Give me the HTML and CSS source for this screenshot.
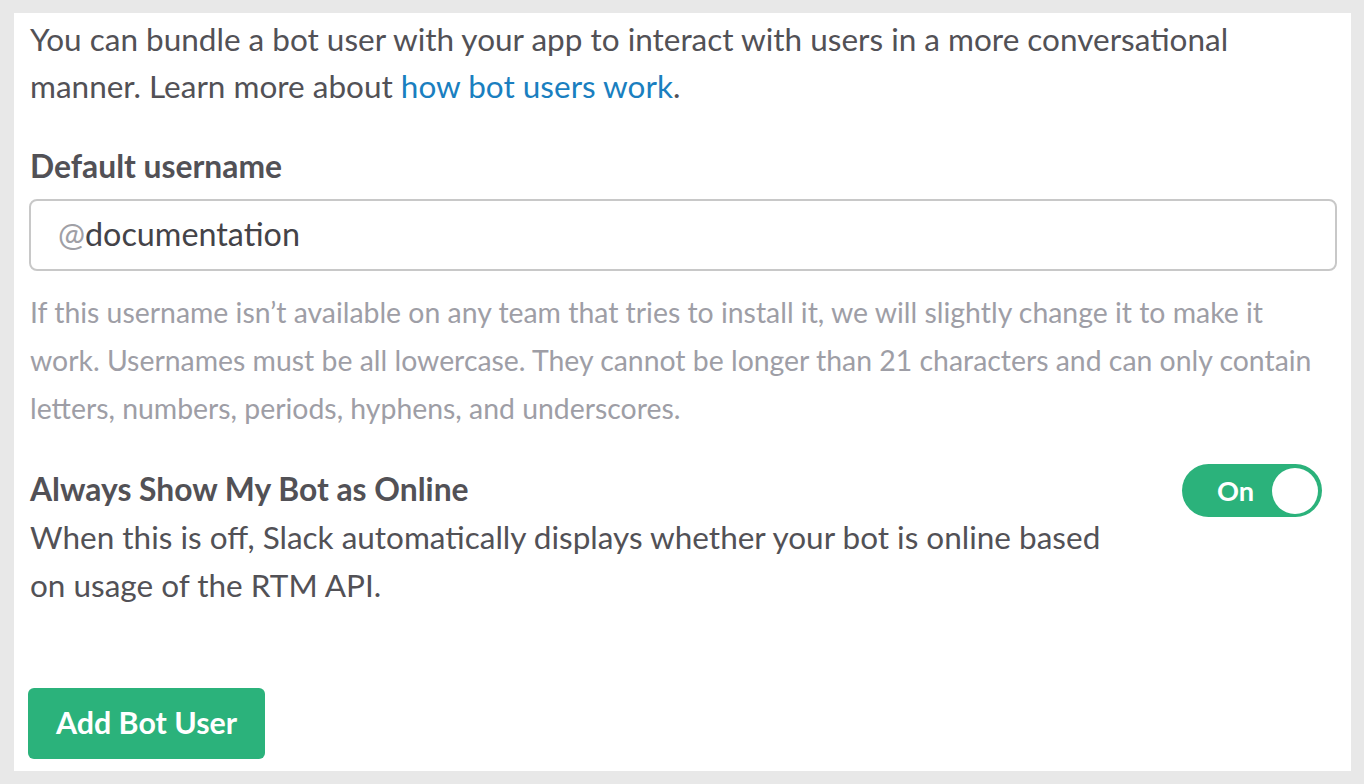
FILE: index.html
```html
<!DOCTYPE html>
<html>
<head>
<meta charset="utf-8">
<link rel="stylesheet" href="styles.css">
</head>
<body>
<div class="card">
  <p class="intro">You can bundle a bot user with your app to interact with users in a more conversational manner. Learn more about <a class="link" href="#">how bot users work</a>.</p>
  <label class="label">Default username</label>
  <div class="input"><span class="at">@</span>documentation</div>
  <p class="help">If this username isn’t available on any team that tries to install it, we will slightly change it to make it work. Usernames must be all lowercase. They cannot be longer than 21 characters and can only contain letters, numbers, periods, hyphens, and underscores.</p>
  <div class="setting">
    <div class="setting-text">
      <div class="setting-title">Always Show My Bot as Online</div>
      <p class="setting-desc">When this is off, Slack automatically displays whether your bot is online based on usage of the RTM API.</p>
    </div>
    <div class="toggle"><span class="toggle-label">On</span><span class="knob"></span></div>
  </div>
  <button class="btn">Add Bot User</button>
</div>
</body>
</html>
```
FILE: styles.css
```css
html, body {
  margin: 0;
  padding: 0;
}
body {
  background: #e8e8e8;
  padding: 13px 13px 13px 14px;
  font-family: Lato, "Liberation Sans", sans-serif;
  color: #525156;
}
.card {
  background: #fff;
  height: 758px;
  box-sizing: border-box;
  padding: 3px 14px 0 15px;
}
.intro {
  margin: 0;
  font-size: 31.5px;
  line-height: 47px;
  padding-left: 1px;
}
.link {
  color: #1a7fc0;
  text-decoration: none;
}
.label {
  display: block;
  margin-top: 33px;
  font-weight: 700;
  font-size: 31.8px;
  line-height: 47px;
  padding-left: 1px;
}
.input {
  margin-top: 9px;
  height: 72px;
  box-sizing: border-box;
  border: 2px solid #c8c8c8;
  border-radius: 8px;
  padding: 0 0 3px 27px;
  display: flex;
  align-items: center;
  font-size: 32.3px;
  color: #444348;
}
.at {
  color: #a0a0a6;
}
.help {
  margin: 17px 0 0;
  font-size: 28.4px;
  line-height: 48px;
  color: #9e9ea6;
  padding-left: 1px;
}
.setting {
  margin-top: 33px;
  display: flex;
  justify-content: space-between;
  align-items: flex-start;
}
.setting-text {
  width: 1086px;
  padding-left: 1px;
}
.setting-title {
  font-weight: 700;
  font-size: 31.8px;
  line-height: 48px;
}
.setting-desc {
  margin: 0;
  font-size: 31.5px;
  line-height: 48px;
}
.toggle {
  margin-top: -1px;
  margin-right: 15px;
  width: 140px;
  height: 53px;
  box-sizing: border-box;
  border-radius: 27px;
  background: #2bb27b;
  display: flex;
  align-items: center;
  justify-content: space-between;
  padding: 0 4px 0 35px;
}
.toggle-label {
  color: #fff;
  font-weight: 700;
  font-size: 27.2px;
}
.knob {
  width: 46px;
  height: 46px;
  border-radius: 50%;
  background: #fff;
}
.btn {
  margin-top: 79px;
  margin-left: -1px;
  display: block;
  width: 237px;
  height: 71px;
  border: none;
  border-radius: 6px;
  background: #2bb27b;
  color: #fff;
  font-family: Lato, "Liberation Sans", sans-serif;
  font-weight: 700;
  font-size: 30.4px;
  padding: 0 0 4px;
}
```
